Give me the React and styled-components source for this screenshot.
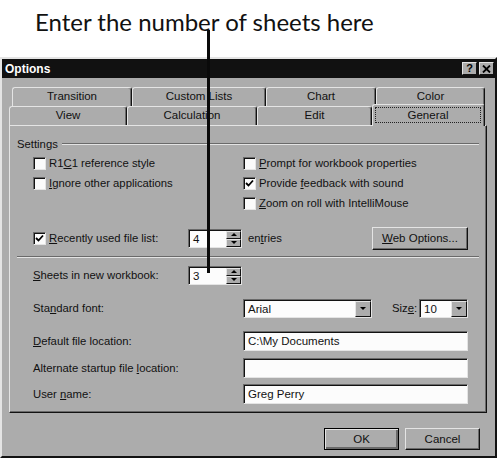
import React from 'react'
import styled, { createGlobalStyle, css } from 'styled-components'

const face = '#acacac'
const light = '#e4e4e4'
const shadow = '#6a6a6a'
const dark = '#121212'

const GlobalStyle = createGlobalStyle`
  html, body {
    margin: 0;
    padding: 0;
    background: #fff;
  }
  body {
    font-family: 'Liberation Sans', Arial, sans-serif;
  }
`

const Page = styled.div`
  position: relative;
  width: 500px;
  height: 460px;
  overflow: hidden;
  background: #fff;
`

const Caption = styled.div`
  box-sizing: border-box;
  height: 57px;
  padding: 2px 0 0 35px;
  font-family: 'Lato', 'Open Sans', sans-serif;
  font-size: 24px;
  line-height: 40px;
  color: #111;
`

// callout pointer drawn over the dialog
const Callout = styled.div`
  position: absolute;
  left: 207px;
  top: 30px;
  width: 3px;
  height: 243px;
  background: #0a0a0a;
  z-index: 5;
`

const Dialog = styled.div`
  box-sizing: border-box;
  width: 497px;
  height: 401px;
  background: ${face};
  border: 2px solid;
  border-color: ${light} ${dark} ${dark} ${light};
  display: flex;
  flex-direction: column;
`

const TitleBar = styled.div`
  height: 19px;
  background: #111;
  display: flex;
  align-items: center;
  justify-content: space-between;
  padding: 0 1px 0 3px;
`

const Title = styled.span`
  color: #fff;
  font-weight: bold;
  font-size: 12px;
`

const TitleButtons = styled.div`
  display: flex;
  gap: 2px;
`

const TitleButton = styled.span`
  box-sizing: border-box;
  width: 15px;
  height: 13px;
  background: ${face};
  border: 1px solid;
  border-color: ${light} ${dark} ${dark} ${light};
  display: flex;
  align-items: center;
  justify-content: center;
  font-size: 11px;
  font-weight: bold;
  color: #000;
  line-height: 1;
`

const Body = styled.div`
  padding: 9px 8px 0 7px;
`

const TabRow = styled.div`
  display: flex;
  height: 19px;
  padding-left: ${p => p.$indent || 0}px;
`

const Tab = styled.div`
  box-sizing: border-box;
  width: ${p => p.$w}px;
  height: 19px;
  border: 1px solid;
  border-color: ${light} ${dark} transparent ${light};
  border-bottom: none;
  border-radius: 3px 3px 0 0;
  box-shadow: inset -1px 0 0 ${shadow};
  font-size: 11.5px;
  line-height: 17px;
  text-align: center;
  color: #111;
  background: ${face};
  ${p => p.$active && css`
    position: relative;
    z-index: 2;
    height: 22px;
    margin-top: -2px;
    padding: 2px 3px 0 2px;
  `}
`

const Focus = styled.span`
  display: block;
  border: 1px dotted #222;
  line-height: 14px;
`

const Panel = styled.div`
  box-sizing: border-box;
  width: 478px;
  height: 288px;
  border: 1px solid;
  border-color: ${light} ${dark} ${dark} ${light};
  box-shadow: inset -1px -1px 0 ${shadow};
  padding: 11px 7px 0 7px;
  font-size: 11.3px;
  color: #111;
`

const GroupHeader = styled.div`
  display: flex;
  align-items: center;
  gap: 4px;
  height: 14px;
`

const Etched = styled.div`
  flex: 1;
  height: 0;
  border-top: 1px solid ${shadow};
  border-bottom: 1px solid ${light};
`

const Separator = styled(Etched)`
  flex: none;
  margin-top: 6px;
`

const CheckGrid = styled.div`
  display: grid;
  grid-template-columns: 210px 1fr;
  grid-auto-rows: 20px;
  margin-top: 2px;
  padding-left: 16px;
`

const CheckItem = styled.label`
  display: flex;
  align-items: center;
  gap: 3px;
  white-space: nowrap;
  width: ${p => (p.$w ? `${p.$w}px` : 'auto')};
  flex: none;
`

const Box = styled.span`
  box-sizing: border-box;
  width: 13px;
  height: 13px;
  flex: none;
  background: #fbfbfb;
  border: 1px solid;
  border-color: ${shadow} ${light} ${light} ${shadow};
  box-shadow: inset 1px 1px 0 ${dark};
  display: flex;
  align-items: center;
  justify-content: center;
`

const U = styled.span`
  text-decoration: underline;
  text-underline-offset: 1px;
`

const Row = styled.div`
  display: flex;
  align-items: center;
  height: ${p => p.$h || 20}px;
  margin-top: ${p => p.$top}px;
  padding-left: 16px;
  margin-right: 11px;
  white-space: nowrap;
`

const Label = styled.span`
  width: ${p => p.$w}px;
  flex: none;
`

const Field = styled.div`
  box-sizing: border-box;
  display: flex;
  align-items: stretch;
  width: ${p => (p.$w ? `${p.$w}px` : 'auto')};
  flex: ${p => (p.$w ? 'none' : '1')};
  height: ${p => p.$h || 20}px;
  background: #fcfcfc;
  border: 1px solid;
  border-color: ${shadow} ${light} ${light} ${shadow};
  box-shadow: inset 1px 1px 0 ${dark};
`

const FieldText = styled.span`
  flex: 1;
  padding: 1px 0 0 4px;
  line-height: 17px;
  font-size: 11.5px;
  overflow: hidden;
`

const SpinCol = styled.div`
  display: flex;
  flex-direction: column;
  width: 15px;
  padding: 1px 0 0;
`

const ArrowBtn = styled.span`
  box-sizing: border-box;
  flex: 1;
  background: ${face};
  border: 1px solid;
  border-color: ${light} ${dark} ${dark} ${light};
  display: flex;
  align-items: center;
  justify-content: center;
  ${p => p.$drop && css`
    width: 16px;
    flex: none;
    margin: 1px 0 0;
  `}
  &::after {
    content: '';
    width: 0;
    height: 0;
    border-left: 3px solid transparent;
    border-right: 3px solid transparent;
    ${p => (p.$up
      ? css`border-bottom: 3px solid #000;`
      : css`border-top: 3px solid #000;`)}
  }
`

const Button = styled.button`
  box-sizing: border-box;
  width: ${p => p.$w}px;
  height: ${p => p.$h || 22}px;
  padding: 0;
  background: ${face};
  color: #111;
  font-family: 'Liberation Sans', Arial, sans-serif;
  font-size: 11.5px;
  border: 1px solid;
  border-color: ${light} ${dark} ${dark} ${light};
  box-shadow: inset -1px -1px 0 ${shadow};
  ${p => p.$default && css`
    border: 1px solid #000;
    box-shadow: inset 1px 1px 0 ${light}, inset -2px -2px 0 ${shadow};
  `}
`

const Footer = styled.div`
  display: flex;
  justify-content: flex-end;
  gap: 6px;
  padding: 15px 7px 0 0;
`

const Check = () => (
  <svg width="9" height="9" viewBox="0 0 9 9">
    <path d="M1 4 L3.5 6.5 L8 1.5" stroke="#000" strokeWidth="1.8" fill="none" />
  </svg>
)

const CheckBox = ({ checked, children, w }) => (
  <CheckItem $w={w}>
    <Box>{checked && <Check />}</Box>
    <span>{children}</span>
  </CheckItem>
)

const Spin = ({ value }) => (
  <Field $w={54} $h={19}>
    <FieldText>{value}</FieldText>
    <SpinCol>
      <ArrowBtn $up />
      <ArrowBtn />
    </SpinCol>
  </Field>
)

const Combo = ({ value, w }) => (
  <Field $w={w} $h={19}>
    <FieldText>{value}</FieldText>
    <ArrowBtn $drop />
  </Field>
)

const row1 = [['Transition', 120], ['Custom Lists', 134], ['Chart', 110], ['Color', 109]]
const row2 = [['View', 118], ['Calculation', 130], ['Edit', 115]]

export default function App() {
  return (
    <Page>
      <GlobalStyle />
      <Caption>Enter the number of sheets here</Caption>
      <Callout />
      <Dialog>
        <TitleBar>
          <Title>Options</Title>
          <TitleButtons>
            <TitleButton>?</TitleButton>
            <TitleButton>
              <svg width="9" height="8" viewBox="0 0 9 8">
                <path d="M1 0.5 L8 7.5 M8 0.5 L1 7.5" stroke="#000" strokeWidth="1.8" />
              </svg>
            </TitleButton>
          </TitleButtons>
        </TitleBar>
        <Body>
          <TabRow $indent={3}>
            {row1.map(([t, w]) => <Tab key={t} $w={w}>{t}</Tab>)}
          </TabRow>
          <TabRow>
            {row2.map(([t, w]) => <Tab key={t} $w={w}>{t}</Tab>)}
            <Tab $w={113} $active><Focus>General</Focus></Tab>
          </TabRow>
          <Panel>
            <GroupHeader>
              <span>Settings</span>
              <Etched />
            </GroupHeader>
            <CheckGrid>
              <CheckBox>R1<U>C</U>1 reference style</CheckBox>
              <CheckBox><U>P</U>rompt for workbook properties</CheckBox>
              <CheckBox><U>I</U>gnore other applications</CheckBox>
              <CheckBox checked>Provide <U>f</U>eedback with sound</CheckBox>
              <span />
              <CheckBox><U>Z</U>oom on roll with IntelliMouse</CheckBox>
            </CheckGrid>
            <Row $top={13} $h={24}>
              <CheckBox checked w={155}><U>R</U>ecently used file list:</CheckBox>
              <Spin value="4" />
              <span style={{ marginLeft: 6 }}>en<U>t</U>ries</span>
              <Button $w={96} $h={23} style={{ marginLeft: 'auto' }}><U>W</U>eb Options...</Button>
            </Row>
            <Separator />
            <Row $top={7}>
              <Label $w={155}><U>S</U>heets in new workbook:</Label>
              <Spin value="3" />
            </Row>
            <Row $top={13}>
              <Label $w={210}>Sta<U>n</U>dard font:</Label>
              <Combo value="Arial" w={129} />
              <span style={{ marginLeft: 20 }}>Siz<U>e</U>:</span>
              <span style={{ flex: 1 }} />
              <Combo value="10" w={49} />
            </Row>
            <Row $top={13}>
              <Label $w={210}><U>D</U>efault file location:</Label>
              <Field><FieldText>C:\My Documents</FieldText></Field>
            </Row>
            <Row $top={7}>
              <Label $w={210}>Alternate startup file <U>l</U>ocation:</Label>
              <Field><FieldText /></Field>
            </Row>
            <Row $top={6}>
              <Label $w={210}>User <U>n</U>ame:</Label>
              <Field><FieldText>Greg Perry</FieldText></Field>
            </Row>
          </Panel>
          <Footer>
            <Button $w={75} $default>OK</Button>
            <Button $w={75}>Cancel</Button>
          </Footer>
        </Body>
      </Dialog>
    </Page>
  )
}
